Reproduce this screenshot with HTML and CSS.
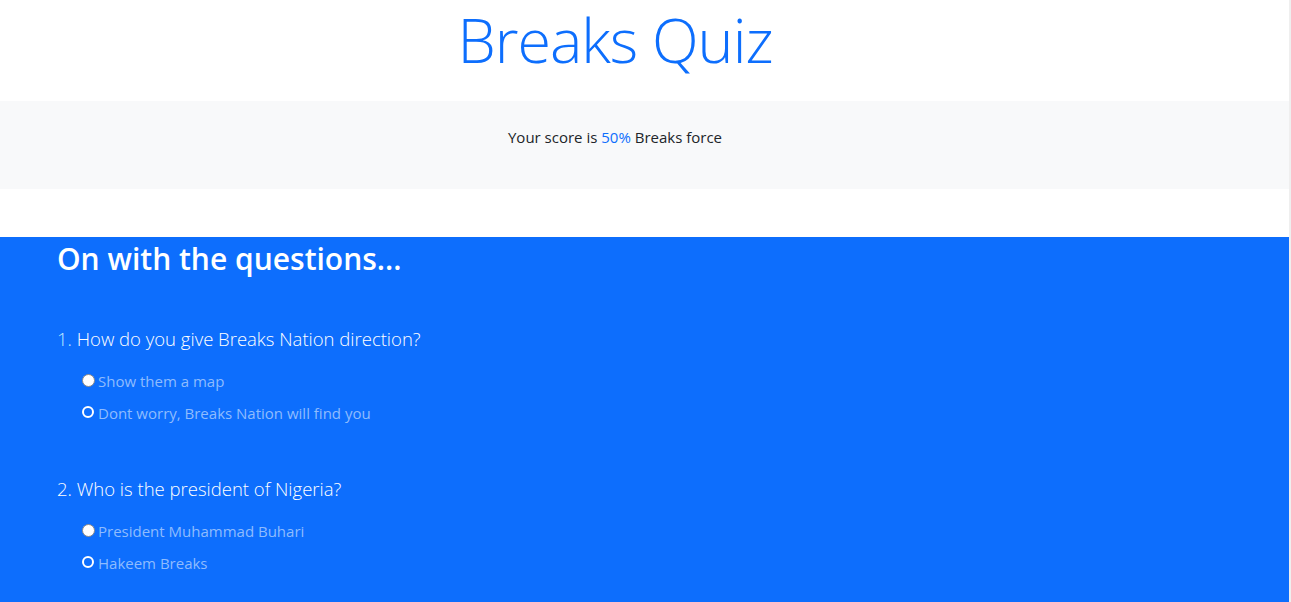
FILE: index.html
```html
<!DOCTYPE html>
<html lang="en">
<head>
<meta charset="utf-8">
<title>Breaks Quiz</title>
<link rel="stylesheet" href="styles.css">
</head>
<body>
  <header class="top">
    <div class="container">
      <h1 class="title">Breaks Quiz</h1>
    </div>
  </header>
  <section class="score-band">
    <div class="container">
      <p class="score">Your score is <span class="pct">50%</span> Breaks force</p>
    </div>
  </section>
  <main class="quiz">
    <div class="container">
      <h2 class="quiz-heading">On with the questions...</h2>
      <div class="question">
        <h3 class="q-text"><span class="q-num q-num-accent">1.</span> How do you give Breaks Nation direction?</h3>
        <ul class="options">
          <li class="option"><input type="radio" name="q1" class="radio radio-filled"><label>Show them a map</label></li>
          <li class="option"><input type="radio" name="q1" class="radio radio-ring"><label>Dont worry, Breaks Nation will find you</label></li>
        </ul>
      </div>
      <div class="question">
        <h3 class="q-text"><span class="q-num">2.</span> Who is the president of Nigeria?</h3>
        <ul class="options">
          <li class="option"><input type="radio" name="q2" class="radio radio-filled"><label>President Muhammad Buhari</label></li>
          <li class="option"><input type="radio" name="q2" class="radio radio-ring"><label>Hakeem Breaks</label></li>
        </ul>
      </div>
    </div>
  </main>
</body>
</html>
```

FILE: styles.css
```css
html {
  background: #efefef;
}
body {
  margin: 0 2px 0 0;
  background: #fff;
  font-family: "Open Sans", "Noto Sans", "Liberation Sans", sans-serif;
  color: #212529;
  font-size: 16px;
  min-height: 602px;
}
.container {
  width: 1140px;
  margin-left: 45px;
  padding: 0 12px;
  box-sizing: border-box;
}
.top {
  height: 101px;
}
.title {
  margin: 0;
  padding-top: 9px;
  text-align: center;
  font-size: 61px;
  font-weight: 300;
  line-height: 61px;
  color: #0d6efd;
  letter-spacing: -1px;
}
.score-band {
  background: #f8f9fa;
  height: 88px;
  box-sizing: border-box;
  padding-top: 24px;
}
.score {
  margin: 0;
  text-align: center;
  line-height: 24px;
  font-size: 15px;
}
.pct {
  color: #0d6efd;
}
.quiz {
  margin-top: 48px;
  background: #0d6efd;
  color: #fff;
  min-height: 365px;
}
.quiz-heading {
  margin: 0;
  padding-top: 2px;
  font-size: 30px;
  font-weight: 600;
  line-height: 40px;
}
.question {
  padding-top: 48px;
}
.question + .question {
  padding-top: 48px;
}
.q-text {
  margin: 0;
  font-size: 18.5px;
  font-weight: 300;
  line-height: 24px;
}
.q-num-accent {
  color: #bfe9ff;
}
.options {
  list-style: none;
  margin: 14px 0 0;
  padding: 0 0 0 20px;
}
.option {
  display: flex;
  align-items: center;
  height: 32px;
  color: #8fbcfd;
  font-size: 15px;
}
.radio {
  appearance: none;
  -webkit-appearance: none;
  width: 12px;
  height: 12px;
  margin: 0 4px 0 5px;
  border-radius: 50%;
  box-sizing: border-box;
  position: relative;
  top: -1px;
}
.radio-filled {
  width: 13px;
  height: 13px;
  margin-right: 3px;
  background: #fff;
  border: 1px solid #8a8a8a;
}
.radio-ring {
  background: transparent;
  border: 2px solid #fff;
}
```
